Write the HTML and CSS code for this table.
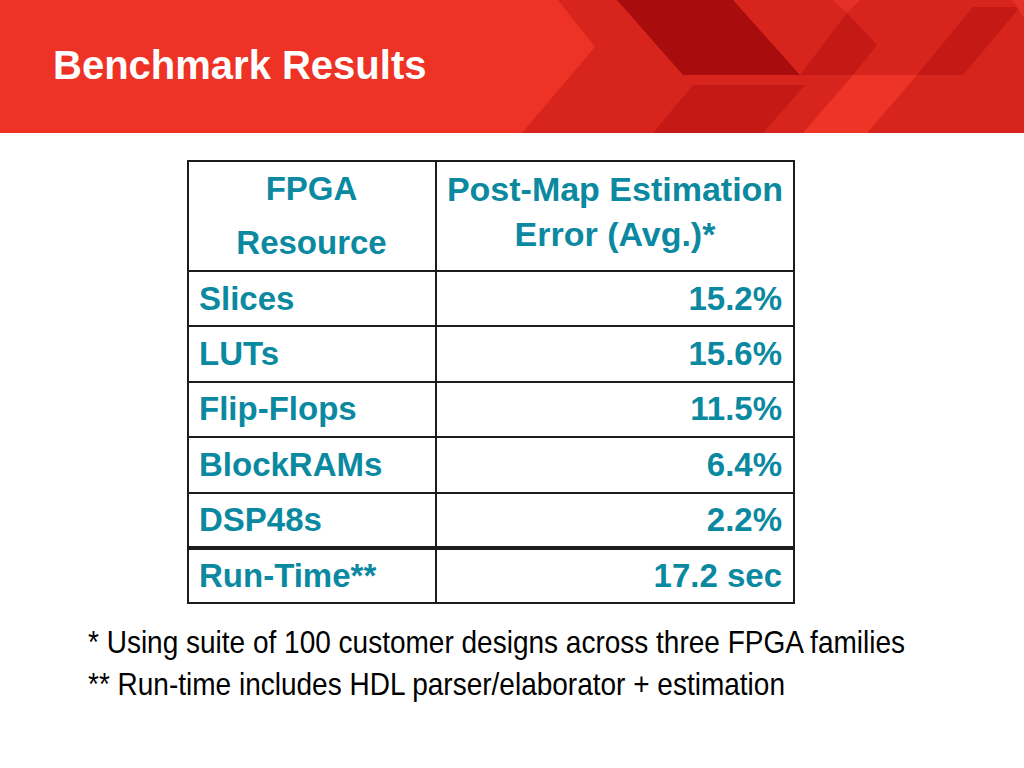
FILE: index.html
```html
<!DOCTYPE html>
<html lang="en">
<head>
<meta charset="utf-8">
<title>Benchmark Results</title>
<link rel="stylesheet" href="styles.css">
</head>
<body>
<header class="banner">
  <svg class="banner-art" viewBox="0 0 1024 133" preserveAspectRatio="none" aria-hidden="true">
    <rect x="0" y="0" width="1024" height="133" fill="#ee3225"/>
    <polygon points="558,0 1024,0 1024,133 522,133 595,47" fill="#d7241c"/>
    <polygon points="617,0 733,0 800,75 683,75" fill="#a90c0d"/>
    <polygon points="693,85 805,85 763,133 653,133" fill="#c41915"/>
    <polygon points="847,13 877,45 853,75 800,75" fill="#c41915"/>
    <polygon points="833,0 860,0 847,13" fill="#e5302a"/>
    <polygon points="973,7 1020,7 963,75 917,75" fill="#c41915"/>
    <polygon points="853,75 917,75 867,133 803,133" fill="#ee3427"/>
    <polygon points="1012,0 1024,0 1024,18" fill="#e5302a"/>
  </svg>
  <h1 class="title">Benchmark Results</h1>
</header>
<main class="content">
  <table class="results">
    <colgroup>
      <col class="c1">
      <col class="c2">
    </colgroup>
    <thead>
      <tr class="head-row">
        <th class="col-res head-res">FPGA<br>Resource</th>
        <th class="col-err head-err">Post-Map Estimation<br>Error (Avg.)*</th>
      </tr>
    </thead>
    <tbody>
      <tr><td class="col-res">Slices</td><td class="col-err">15.2%</td></tr>
      <tr><td class="col-res">LUTs</td><td class="col-err">15.6%</td></tr>
      <tr><td class="col-res">Flip-Flops</td><td class="col-err">11.5%</td></tr>
      <tr><td class="col-res">BlockRAMs</td><td class="col-err">6.4%</td></tr>
      <tr><td class="col-res">DSP48s</td><td class="col-err">2.2%</td></tr>
      <tr class="total-row"><td class="col-res">Run-Time**</td><td class="col-err">17.2 sec</td></tr>
    </tbody>
  </table>
  <div class="notes">
    <p class="note">* Using suite of 100 customer designs across three FPGA families</p>
    <p class="note">** Run-time includes HDL parser/elaborator + estimation</p>
  </div>
</main>
</body>
</html>
```

FILE: styles.css
```css
html, body {
  margin: 0;
  padding: 0;
  background: #ffffff;
}

body {
  width: 1024px;
  height: 768px;
  overflow: hidden;
  font-family: "Liberation Sans", Arial, sans-serif;
}

.banner {
  position: relative;
  height: 133px;
  overflow: hidden;
}

.banner-art {
  position: absolute;
  left: 0;
  top: 0;
  width: 1024px;
  height: 133px;
  display: block;
}

.title {
  position: relative;
  margin: 0;
  padding: 42px 0 0 53px;
  font-size: 40px;
  line-height: 46px;
  font-weight: bold;
  color: #ffffff;
}

.content {
  padding: 27px 0 0 0;
}

.results {
  margin-left: 187px;
  width: 606px;
  border-collapse: collapse;
  table-layout: fixed;
  border: 2px solid #1c1c1c;
  color: #0b89a1;
  font-size: 33px;
  font-weight: bold;
}

.c1 {
  width: 248px;
}

.c2 {
  width: 358px;
}

.results th,
.results td {
  border: 2px solid #1c1c1c;
  padding: 0 11px 0 10px;
}

.col-res {
  text-align: left;
}

.col-err {
  text-align: right;
}

.head-row {
  height: 110px;
}

.results th {
  vertical-align: top;
  text-align: center;
  font-weight: bold;
  white-space: nowrap;
}

.results th.head-res {
  line-height: 54px;
  padding-top: 0;
}

.results th.head-err {
  padding: 5px 0 0 0;
  font-size: 34px;
  line-height: 45px;
}

.results tbody tr {
  height: 55.4px;
}

.results td {
  vertical-align: middle;
  line-height: 36px;
}

.total-row td {
  border-top: 4px solid #1c1c1c;
}

.notes {
  padding: 17px 0 0 88px;
}

.note {
  margin: 0;
  font-family: "Liberation Sans", Arial, sans-serif;
  font-size: 32px;
  line-height: 42px;
  color: #000000;
  white-space: nowrap;
  transform: scaleX(0.875);
  transform-origin: left center;
}
```
